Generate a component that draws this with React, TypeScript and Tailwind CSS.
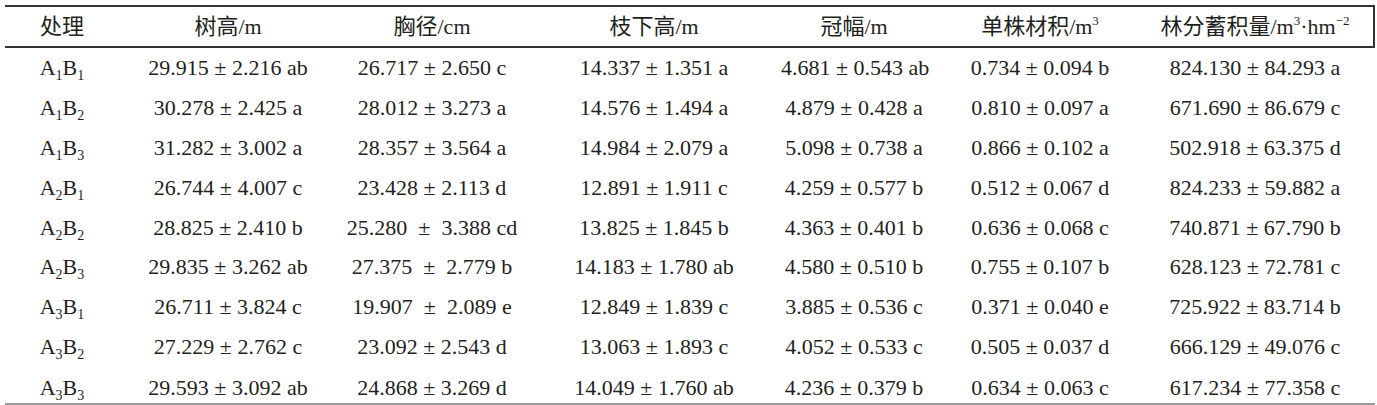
import React from "react";

type Row = { a: string; b: string; cells: string[] };

const rows: Row[] = [
  { a: "1", b: "1", cells: ["29.915 ± 2.216 ab", "26.717 ± 2.650 c", "14.337 ± 1.351 a", "4.681 ± 0.543 ab", "0.734 ± 0.094 b", "824.130 ± 84.293 a"] },
  { a: "1", b: "2", cells: ["30.278 ± 2.425 a", "28.012 ± 3.273 a", "14.576 ± 1.494 a", "4.879 ± 0.428 a", "0.810 ± 0.097 a", "671.690 ± 86.679 c"] },
  { a: "1", b: "3", cells: ["31.282 ± 3.002 a", "28.357 ± 3.564 a", "14.984 ± 2.079 a", "5.098 ± 0.738 a", "0.866 ± 0.102 a", "502.918 ± 63.375 d"] },
  { a: "2", b: "1", cells: ["26.744 ± 4.007 c", "23.428 ± 2.113 d", "12.891 ± 1.911 c", "4.259 ± 0.577 b", "0.512 ± 0.067 d", "824.233 ± 59.882 a"] },
  { a: "2", b: "2", cells: ["28.825 ± 2.410 b", "25.280  ±  3.388 cd", "13.825 ± 1.845 b", "4.363 ± 0.401 b", "0.636 ± 0.068 c", "740.871 ± 67.790 b"] },
  { a: "2", b: "3", cells: ["29.835 ± 3.262 ab", "27.375  ±  2.779 b", "14.183 ± 1.780 ab", "4.580 ± 0.510 b", "0.755 ± 0.107 b", "628.123 ± 72.781 c"] },
  { a: "3", b: "1", cells: ["26.711 ± 3.824 c", "19.907  ±  2.089 e", "12.849 ± 1.839 c", "3.885 ± 0.536 c", "0.371 ± 0.040 e", "725.922 ± 83.714 b"] },
  { a: "3", b: "2", cells: ["27.229 ± 2.762 c", "23.092 ± 2.543 d", "13.063 ± 1.893 c", "4.052 ± 0.533 c", "0.505 ± 0.037 d", "666.129 ± 49.076 c"] },
  { a: "3", b: "3", cells: ["29.593 ± 3.092 ab", "24.868 ± 3.269 d", "14.049 ± 1.760 ab", "4.236 ± 0.379 b", "0.634 ± 0.063 c", "617.234 ± 77.358 c"] },
];

const gridCls =
  "grid grid-cols-[114px_218px_190px_254px_146px_226px_204px_1fr] items-center";

function Sub({ children }: { children: React.ReactNode }) {
  return (
    <sub className="text-[14px] relative -bottom-[5px] leading-none">{children}</sub>
  );
}

function Sup({ children }: { children: React.ReactNode }) {
  return (
    <sup className="text-[13px] relative -top-[9px] leading-none">{children}</sup>
  );
}

export default function App() {
  return (
    <div
      className="w-[1377px] h-[405px] bg-white text-[#231f20] overflow-hidden"
      style={{ fontFamily: '"Liberation Serif", "Noto Sans CJK SC", serif' }}
    >
      <div className="pt-[5px] pl-[5px] w-[1375px]">
        <div className="border-t-2 border-[#333]">
          <div
            className={`${gridCls} h-[41px] border-b-2 border-r-2 border-[#333] text-[22px] text-center`}
          >
            <div>处理</div>
            <div>树高/m</div>
            <div>胸径/cm</div>
            <div>枝下高/m</div>
            <div>冠幅/m</div>
            <div>
              单株材积/m<Sup>3</Sup>
            </div>
            <div className="whitespace-nowrap">
              林分蓄积量/m<Sup>3</Sup>·hm<Sup>−2</Sup>
            </div>
            <div />
          </div>
          <div className="border-b-2 border-[#9a9a9a]">
            {rows.map((r, i) => (
              <div
                key={i}
                className={`${gridCls} ${i === rows.length - 1 ? "h-[36.6px] pt-[5px]" : "h-[39.8px]"} text-[22px] text-center whitespace-pre`}
              >
                <div>
                  A<Sub>{r.a}</Sub>B<Sub>{r.b}</Sub>
                </div>
                {r.cells.map((c, j) => (
                  <div key={j}>{c}</div>
                ))}
                <div />
              </div>
            ))}
          </div>
        </div>
      </div>
    </div>
  );
}
